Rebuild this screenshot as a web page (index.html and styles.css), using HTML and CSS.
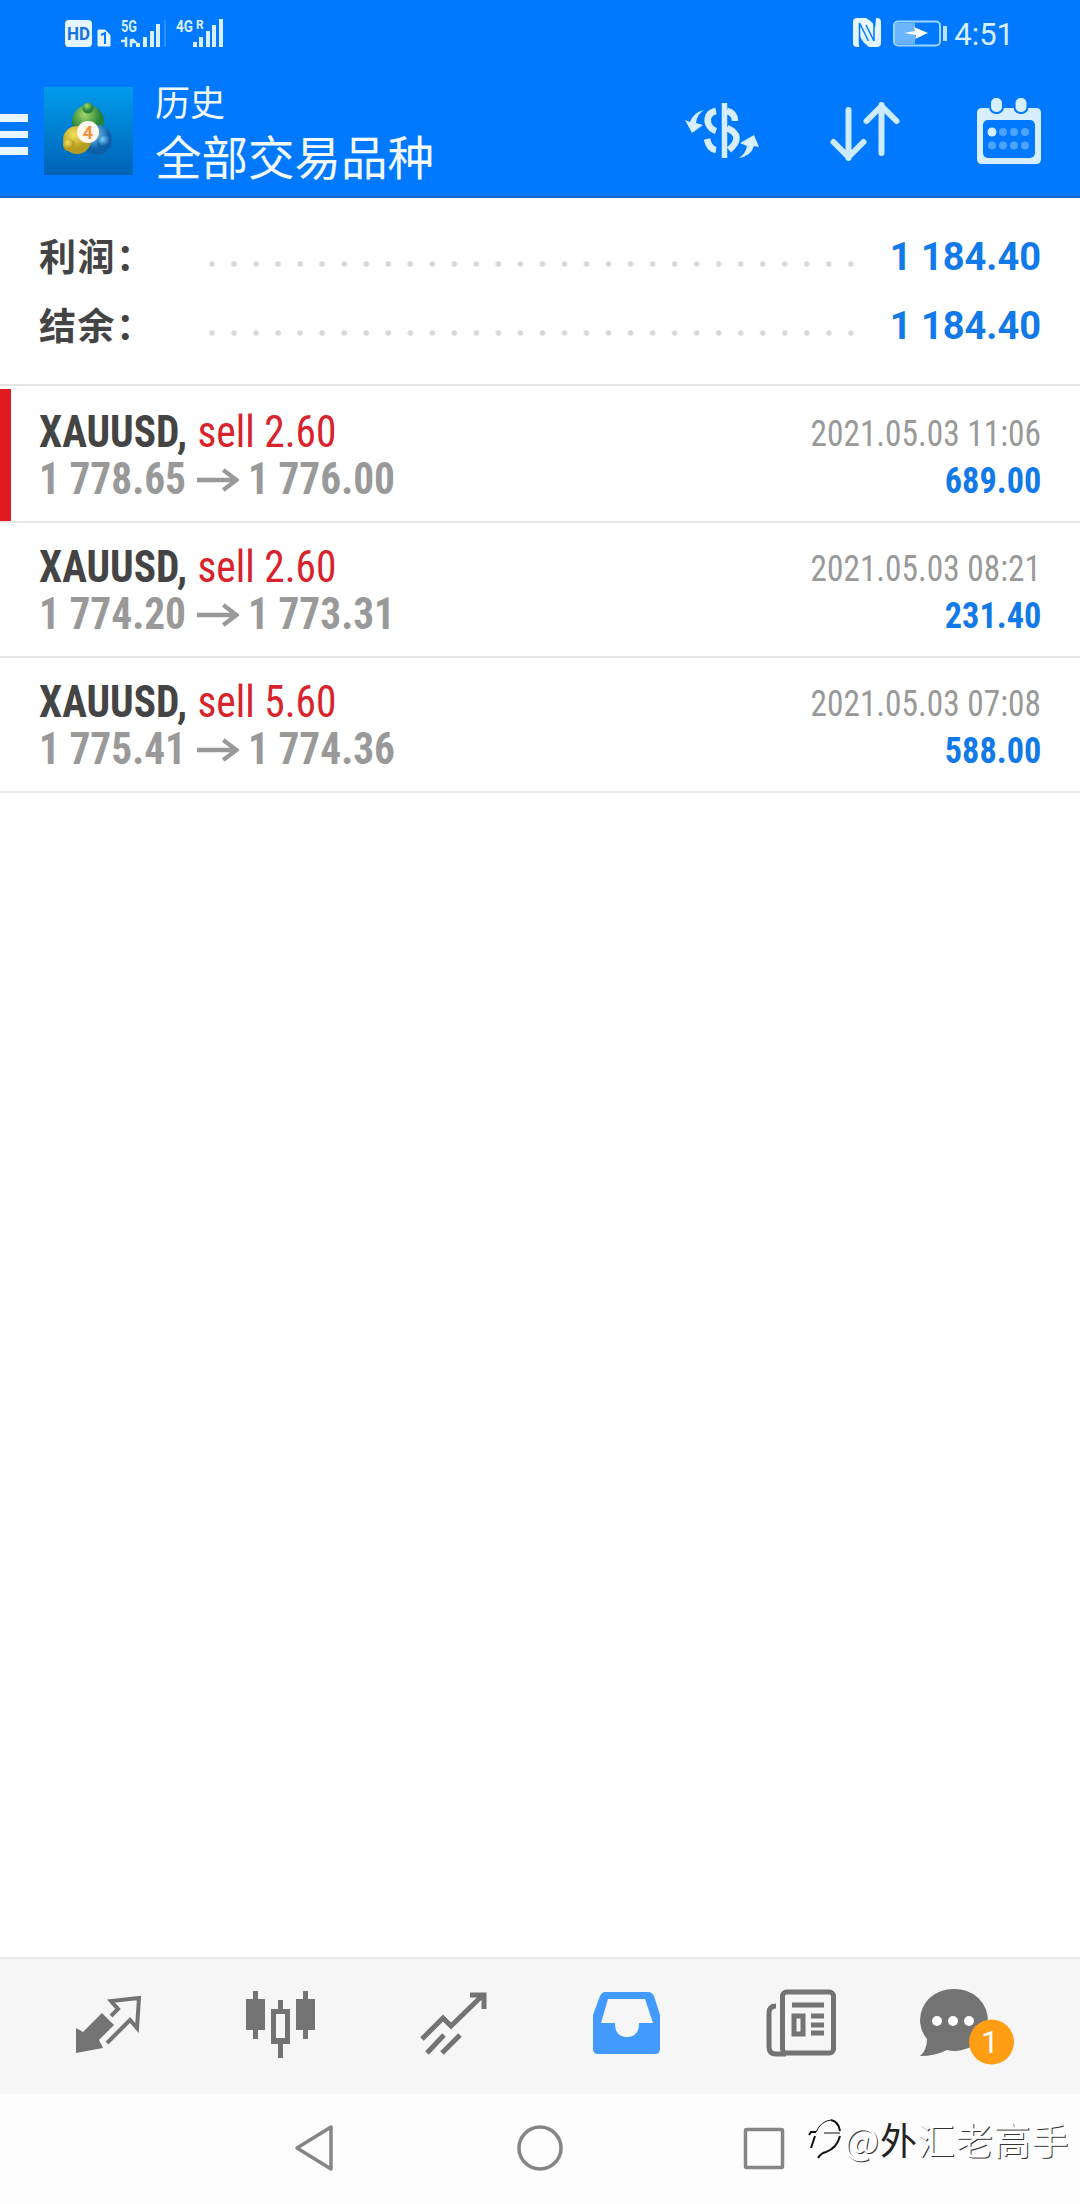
FILE: index.html
```
<!DOCTYPE html>
<html lang="zh"><head><meta charset="utf-8"><title>历史</title><link rel="stylesheet" href="styles.css"></head>
<body>
<header class="top">
<div class="status">
<svg class="net" width="160" height="40" viewBox="64 10 160 40">
<rect x="65" y="20" width="27" height="27" rx="4" fill="#e4f5ff"/><text x="67" y="40" class="hd" textLength="23" lengthAdjust="spacingAndGlyphs">HD</text>
<path d="M98 30h7l5 5v11H98z" fill="#e4f5ff" stroke="#e4f5ff" stroke-linejoin="round"/><path d="M101 35l4-2v11" class="cut"/>
<text x="121" y="32" class="tiny" textLength="16" lengthAdjust="spacingAndGlyphs">5G</text>
<path d="M121 41h5v-4M126 38v9M131 47v-8M131 42h4l-3-3" class="mini"/>
<path d="M136 43h4v4h-4zM143 37h4v10h-4zM150 31h4v16h-4zM156 24h4v23h-4z" fill="#d8efff"/><path d="M164 20h2v27h-2z" fill="#2b8fff"/>
<text x="176" y="32" class="tiny" textLength="17" lengthAdjust="spacingAndGlyphs">4G</text><text x="196" y="29" class="tiny r">R</text>
<path d="M193 42h4v5h-4zM199 37h4v10h-4zM206 31h4v16h-4zM212 25h4v22h-4zM219 19h4v28h-4z" fill="#d8efff"/>
</svg>
<div class="right"><svg width="100" height="32" viewBox="849 18 100 32">
<path d="M858 18h9q8 4 9 11l1-11h1q4 0 4 4v21q0 4-4 4h-8q-7-5-9-11l-1 11h-2q-4 0-4-4V22q0-4 4-4z" fill="#e4f5ff"/><path d="M860.500 45V23l9 18M875 20v21l-8-16" fill="none" stroke="#0079ff" stroke-width="1.500"/>
<rect x="895" y="21.500" width="46" height="24" rx="4" fill="none" stroke="#9bd4ff" stroke-width="2"/><path d="M896 23h20v21h-20z" fill="#6bb5ff"/><path d="M905 33l11-2-1-4 14 6-13 6 1-4z" fill="#fff"/><path d="M944 26h4v15h-4z" fill="#b9e1ff"/></svg>
<span class="clock">4:51</span></div>
</div>
<div class="bar">
<span class="burger"><i></i><i></i><i></i></span>
<svg class="logo" width="89" height="88" viewBox="0 0 89 88"><defs><linearGradient id="lg" x2="0" y2="1"><stop stop-color="#009cec"/><stop offset="1" stop-color="#0062b5"/></linearGradient><radialGradient id="gn" cx=".4" cy=".3"><stop stop-color="#a4d86c"/><stop offset="1" stop-color="#24813a"/></radialGradient><radialGradient id="yl" cx=".4" cy=".3"><stop stop-color="#f3e45b"/><stop offset="1" stop-color="#b59c20"/></radialGradient><radialGradient id="bl" cx=".4" cy=".3"><stop stop-color="#7fd0f5"/><stop offset="1" stop-color="#0d5fa8"/></radialGradient></defs>
<rect width="89" height="88" fill="url(#lg)"/><circle cx="44" cy="34" r="16" fill="url(#gn)"/><circle cx="44" cy="21" r="5.500" fill="url(#gn)"/><circle cx="53" cy="53" r="15" fill="url(#bl)"/><circle cx="60" cy="55" r="7" fill="url(#bl)"/><circle cx="33" cy="53" r="14" fill="url(#yl)"/><circle cx="25" cy="58" r="6" fill="url(#yl)"/><circle cx="44" cy="45" r="11" fill="#fff7ec"/><text x="44" y="52" class="four">4</text></svg>
<div class="titles"><div class="t1">历史</div><div class="t2">全部交易品种</div></div>
<svg class="acts" width="360" height="72" viewBox="684 96 360 72">
<g fill="none" stroke="#d6eeff" stroke-width="6.500"><path d="M724.500 103v55" stroke-width="5.500"/><path d="M716 111q-10 2-8 12 2 6 8 8M707 139q2 10 9 11M727 111q8 2 8 10M727 128q18 8 2 22"/></g>
<g fill="#d6eeff"><path d="M704 110q-7 4-8 13l7 2-11 8-7-13 5 2q4-10 14-12zM739 158q7-5 8-12l-7-3 14-8 5 12-5-1q-3 10-15 12z"/></g>
<path d="M848.500 110v48M833.500 142l15 15 15-15M881.500 153v-48M866.500 121l15-15 15 15" fill="none" stroke="#cdebff" stroke-width="6" stroke-linecap="round" stroke-linejoin="round"/>
<path d="M982 108h54q5 0 5 5v46q0 5-5 5h-54q-5 0-5-5v-46q0-5 5-5z" fill="#d6eeff"/><rect x="983" y="120" width="52" height="38" rx="5" fill="#0079ff"/>
<g fill="#d6eeff" stroke="#0079ff" stroke-width="2"><rect x="990" y="97" width="13" height="16" rx="6"/><rect x="1014.500" y="97" width="13" height="16" rx="6"/></g>
<g fill="#4da4ff"><circle cx="992" cy="132" r="4.500" fill="#d6eeff"/><circle cx="1003" cy="132" r="4"/><circle cx="1014" cy="132" r="4"/><circle cx="1025" cy="132" r="4"/><circle cx="992" cy="145.500" r="4"/><circle cx="1003" cy="145.500" r="4"/><circle cx="1014" cy="145.500" r="4"/><circle cx="1025" cy="145.500" r="4"/></g>
</svg>
</div>
</header>
<section class="summary">
<div class="sum"><b>利润：</b><span class="dots"></span><strong>1 184.40</strong></div>
<div class="sum"><b>结余：</b><span class="dots"></span><strong>1 184.40</strong></div>
</section>
<main>
<article class="deal marked"><div class="l"><p><b>XAUUSD,</b> <em>sell 2.60</em></p><p class="price"><span>1 778.65</span><svg class="arr" width="46" height="24"><path d="M1 12h42M29 2l14 10-14 10"/></svg><span>1 776.00</span></p></div><div class="rt"><time>2021.05.03 11:06</time><strong>689.00</strong></div></article>
<article class="deal"><div class="l"><p><b>XAUUSD,</b> <em>sell 2.60</em></p><p class="price"><span>1 774.20</span><svg class="arr" width="46" height="24"><path d="M1 12h42M29 2l14 10-14 10"/></svg><span>1 773.31</span></p></div><div class="rt"><time>2021.05.03 08:21</time><strong>231.40</strong></div></article>
<article class="deal"><div class="l"><p><b>XAUUSD,</b> <em>sell 5.60</em></p><p class="price"><span>1 775.41</span><svg class="arr" width="46" height="24"><path d="M1 12h42M29 2l14 10-14 10"/></svg><span>1 774.36</span></p></div><div class="rt"><time>2021.05.03 07:08</time><strong>588.00</strong></div></article>
</main>
<nav class="tabs">
<svg width="1080" height="136" viewBox="0 1959 1080 136">
<g fill="none" stroke="#737373" stroke-width="4"><path d="M76 2028l7 4 19-19 12 12-15 15 4 8-27 5z" fill="#737373" stroke="none"/><path d="M111 2016l7-7-7-8 28-3-2 30-7-8-23 23"/></g>
<g fill="#737373"><path d="M246 1999h7v-8h5v8h7v31h-7v9h-5v-9h-7zM296 1999h7v-8h5v8h7v31h-7v9h-5v-9h-7z"/><path fill-rule="evenodd" d="M271 2009h7v-9h5v9h7v35h-7v14h-5v-14h-7zm5 5v24h9v-24z"/></g>
<g fill="none" stroke="#737373" stroke-width="5"><path d="M422 2039l21-21 8 8 33-32M470 1995h14v14"/><path d="M427 2053l17-18M442 2053l18-18"/></g>
<path fill="#429aff" fill-rule="evenodd" d="M605 1992h43q4 0 6 4l6 19v34q0 5-5 5h-57q-5 0-5-5v-34l7-19q2-4 5-4zm3 7l-7 24h14q0 14 12 14t12-14h14l-8-24z"/>
<g fill="none" stroke="#737373" stroke-width="5"><rect x="782.500" y="1992" width="51" height="61" rx="4"/><path d="M776 2006q-7 0-7 7v34q0 7 7 7h10"/><path d="M792 2005h32M811 2016h13M811 2025h13M811 2033h13"/><rect x="794" y="2016" width="9" height="18"/></g>
<path fill="#737373" d="M952 1989a33 31 0 1 1-5 61q-12 6-27 6 7-6 7-17a33 31 0 0 1 25-50z"/><g fill="#fff"><circle cx="937" cy="2021" r="5"/><circle cx="953" cy="2021" r="5"/><circle cx="969" cy="2021" r="5"/></g>
<circle cx="991.500" cy="2042" r="22.500" fill="#ff9d14"/><text x="990" y="2053" class="badge">1</text>
</svg></nav>
<footer class="sys">
<svg width="500" height="60" viewBox="290 2118 500 60"><g fill="none" stroke="#858585" stroke-width="3.500" stroke-linejoin="round"><path d="M297 2148l34-21v42z"/><circle cx="540" cy="2148" r="21"/><rect x="745.500" y="2129.500" width="37" height="38" rx="1"/></g></svg>
<span class="wm"><svg width="36" height="46" viewBox="808 2124 36 46"><g fill="none" stroke="#111"><path d="M816 2140q5-11 15-12" stroke-width="1"/><path d="M831 2128q8 2 9 11M840 2144q-3 12-14 16-5 1-8 6M809 2143l2-3h5M815 2144l-4 12" stroke-width="2"/><path d="M824 2141h16" stroke-width="1"/></g></svg>@<b>外</b>汇老高手</span>
</footer>
</body></html>
```
FILE: styles.css
```
*{box-sizing:border-box}
body{margin:0;width:1080px;height:2204px;background:#fff;display:flex;flex-direction:column;font-family:"Roboto","Noto Sans CJK SC",sans-serif}
p{margin:0}
.top{height:198px;background:#0079ff;border-bottom:2px solid #1569c8;color:#f2faff}
.status{height:64px;padding:10px 66px 0 64px;display:flex;justify-content:space-between}
.right{display:flex;padding-top:8px}
.clock{font-size:31px;line-height:34px;margin-left:6px;color:#d8efff}
.hd{font:bold 18px Roboto;fill:#1673dd}
.tiny{font:bold 16px Roboto;fill:#d8efff}
.r{font-size:12px}
.cut{stroke:#0079ff;stroke-width:2;fill:none}
.mini{stroke:#d8efff;stroke-width:2.500;fill:none}
.bar{display:flex;height:130px;align-items:flex-start}
.burger{width:28px;margin:50px 16px 0 0;display:flex;flex-direction:column;gap:9px}
.burger i{height:7.500px;background:#e8f7ff}
.logo{margin-top:23px}
.four{font:bold 18px Roboto;fill:#f2913f;text-anchor:middle}
.titles{margin-left:22px;width:480px}
.t1{font-size:35px;line-height:40px;margin-top:21px}
.t2{font-size:46.500px;line-height:60px;margin-top:4px}
.acts{margin-top:32px;margin-left:49px;flex:none}
.summary{height:188px;border-bottom:2px solid #e4e6e6;padding:24px 39px 0 39px}
.sum{display:flex;height:69px;align-items:center}
.sum b{width:168px;font-size:37px;letter-spacing:1.500px;color:#444;margin-top:-4px}
.dots{flex:none;width:661px;height:6px;margin-top:14px;background:radial-gradient(circle at 5px 3px,#d5d7d8 2px,transparent 3.500px) 0 0/22.040px 6px repeat-x}
.sum strong{margin-left:auto;font-size:38px;color:#1279e8}
.deal{height:135px;border-bottom:2px solid #e6e8e8;padding:21px 39px 0 39px;display:flex;justify-content:space-between;font-stretch:75%;font-family:"Roboto Condensed","Roboto",sans-serif}
.deal:first-child{height:137px;padding-top:23px}
.marked{background:linear-gradient(#e01b20,#e01b20) 0 3px/11px 132px no-repeat}
.l{transform:scaleX(.94);transform-origin:left}
.l p{font-size:44px;line-height:47px;white-space:nowrap;color:#444}
em{font-style:normal;color:#d8222c;margin-left:1px}
.l .price{display:flex;align-items:center;color:#999;font-weight:bold}
.arr{margin:0 9px 0 11px;fill:none;stroke:#999;stroke-width:4.500}
.rt{display:flex;flex-direction:column;align-items:flex-end;padding-top:1px;font-size:37px;line-height:47px;color:#999}
.rt time{transform:scaleX(.9);transform-origin:right}
.rt strong{color:#1279e8;transform:scaleX(.925);transform-origin:right}
.tabs{margin-top:auto;height:137px;background:#f6f6f6;border-top:2px solid #e6e6e6}
.tabs svg{display:block}
.badge{font:32px Roboto;fill:#fff;text-anchor:middle}
.sys{height:110px;background:#fdfdfd;display:flex;padding:24px 0 0 290px}
.wm{display:flex;align-items:center;height:50px;margin:-4px 0 0 18px;letter-spacing:.900px;font:37px/50px "Noto Sans CJK SC",sans-serif;color:#fff;text-shadow:1px 1px 0 #333}
.wm b{font-weight:400;color:#222;text-shadow:none}
```
